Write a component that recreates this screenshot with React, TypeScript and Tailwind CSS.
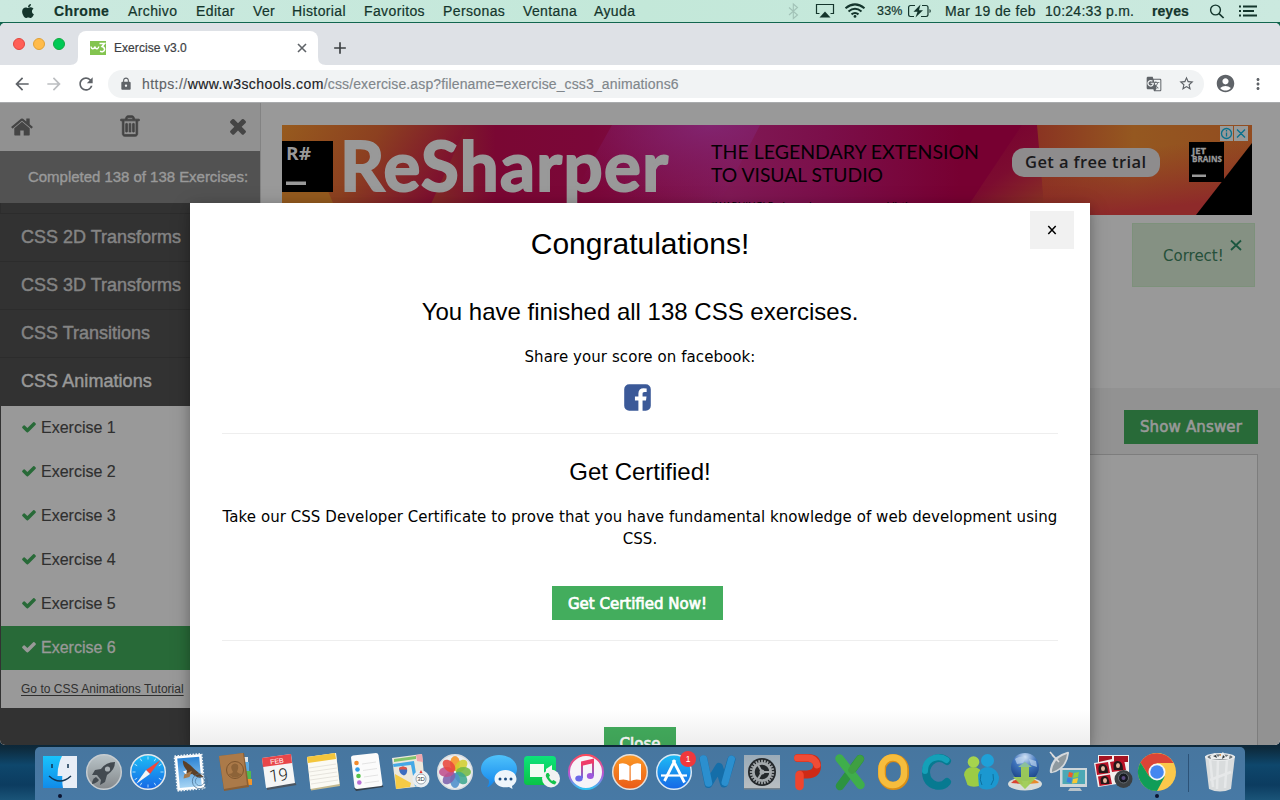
import React from "react";
import { FaApple } from "react-icons/fa";
import {
  MdAccountCircle,
  MdArrowBack,
  MdArrowForward,
  MdClose,
  MdGTranslate,
  MdAdd,
  MdLock,
  MdMoreVert,
  MdRefresh,
  MdStarBorder,
} from "react-icons/md";

const CHECK =
  "M1671 566q0 40-28 68l-724 724-136 136q-28 28-68 28t-68-28l-136-136-362-362q-28-28-28-68t28-68l136-136q28-28 68-28t68 28l294 295 656-657q28-28 68-28t68 28l136 136q28 28 28 68z";
const TIMES =
  "M1490 1322q0 40-28 68l-136 136q-28 28-68 28t-68-28l-294-294-294 294q-28 28-68 28t-68-28l-136-136q-28-28-28-68t28-68l294-294-294-294q-28-28-28-68t28-68l136-136q28-28 68-28t68 28l294 294 294-294q28-28 68-28t68 28l136 136q28 28 28 68t-28 68l-294 294 294 294q28 28 28 68z";
const HOME =
  "M1472 992v480q0 26-19 45t-45 19h-384v-384h-256v384h-384q-26 0-45-19t-19-45v-480q0-1 .5-3t.5-3l575-474 575 474q1 2 1 6zm223-69l-62 74q-8 9-21 11h-3q-13 0-21-7l-692-577-692 577q-12 8-24 7-13-2-21-11l-62-74q-8-10-7-23.5t11-21.5l719-599q32-26 76-26t76 26l244 204v-195q0-14 9-23t23-9h192q14 0 23 9t9 23v408l219 182q10 8 11 21.5t-7 23.5z";
const TRASH =
  "M704 736v576q0 14-9 23t-23 9h-64q-14 0-23-9t-9-23v-576q0-14 9-23t23-9h64q14 0 23 9t9 23zm256 0v576q0 14-9 23t-23 9h-64q-14 0-23-9t-9-23v-576q0-14 9-23t23-9h64q14 0 23 9t9 23zm256 0v576q0 14-9 23t-23 9h-64q-14 0-23-9t-9-23v-576q0-14 9-23t23-9h64q14 0 23 9t9 23zm128 724v-948h-896v948q0 22 7 40.5t14.5 27 10.5 8.5h832q3 0 10.5-8.5t14.5-27 7-40.5zm-672-1076h448l-48-117q-7-9-17-11h-317q-10 2-17 11zm928 32v64q0 14-9 23t-23 9h-96v948q0 83-47 143.5t-113 60.5h-832q-66 0-113-58.5t-47-141.5v-952h-96q-14 0-23-9t-9-23v-64q0-14 9-23t23-9h309l70-167q15-37 54-63t79-26h320q40 0 79 26t54 63l70 167h309q14 0 23 9t9 23z";
const FACEBOOK =
  "M1376 128q119 0 203.5 84.5t84.5 203.5v960q0 119-84.5 203.5t-203.5 84.5h-188v-595h199l30-232h-229v-148q0-56 23.5-84t91.5-28l122-1v-207q-63-9-178-9-136 0-217.5 80t-81.5 226v171h-200v232h200v595h-532q-119 0-203.5-84.5t-84.5-203.5v-960q0-119 84.5-203.5t203.5-84.5h960z";

function Glyph({ d, size, className, weight = 0 }: { d: string; size: number; className?: string; weight?: number }) {
  return (
    <svg viewBox="0 0 1792 1792" width={size} height={size} fill="currentColor" stroke="currentColor" strokeWidth={weight} className={className}>
      <path d={d} />
    </svg>
  );
}

/* ---------- macOS menu bar ---------- */

const menus: [string, string][] = [
  ["Archivo", "w-[68px]"],
  ["Editar", "w-[57px]"],
  ["Ver", "w-[39px]"],
  ["Historial", "w-[72px]"],
  ["Favoritos", "w-[79px]"],
  ["Personas", "w-[80px]"],
  ["Ventana", "w-[71px]"],
  ["Ayuda", "w-[60px]"],
];

function MenuBar() {
  return (
    <header className="flex h-[22px] shrink-0 items-center bg-linear-to-r from-[#cbe9df] via-[#c3e8d9] to-[#cbe9df] text-[14px] tracking-[0.38px] whitespace-nowrap text-[#14352c] [-webkit-text-stroke:0.2px_#14352c]">
      <div className="flex w-[54px] shrink-0 pl-[20px]">
        <FaApple size={16} className="-mt-px" />
      </div>
      <span className="w-[74px] shrink-0 font-bold tracking-[0.4px]">Chrome</span>
      {menus.map(([name, w]) => (
        <span key={name} className={`shrink-0 ${w}`}>
          {name}
        </span>
      ))}
      <div className="flex w-[222px] shrink-0 justify-end">
        <svg width="87" height="22" viewBox="0 0 87 22" fill="none" className="shrink-0 overflow-visible">
          <path d="M0 7.500 8.500 15 4.300 18.500V4L8.500 7.500 0 15" stroke="#a2c2b7" strokeWidth="1.100" />
          <path d="M30.500 13.500H27.500V4.500H44.500V13.500H41.500" stroke="#14352c" strokeWidth="1.200" />
          <path d="M36 11.500 41.500 17.500H30.500Z" fill="#14352c" />
          <g stroke="#14352c" strokeWidth="2">
            <path d="M56.500 8.300Q66 .5 75.500 8.300" />
            <path d="M59.500 11.500Q66 6 72.500 11.500" />
            <path d="M62.500 14.400Q66 11.600 69.500 14.400" />
          </g>
          <circle cx="66" cy="16.400" r="1.400" fill="#14352c" />
        </svg>
      </div>
      <span className="ml-px w-[31px] shrink-0 text-[12.500px] tracking-[0.2px]">33%</span>
      <svg width="24" height="22" viewBox="0 0 24 22" className="shrink-0" fill="none">
        <path d="M7 5.500H2.500Q.6 5.500.6 7.400V14.600Q.6 16.500 2.500 16.500H6M14 5.500H18Q20 5.500 20 7.400V14.600Q20 16.500 18 16.500H13" stroke="#14352c" strokeWidth="1.200" />
        <path d="M21.500 9v4q1.300-.5 1.300-2t-1.300-2ZM12.500 4.500 5.500 11.700H9.500L7.500 17.500 15 10.200H11Z" fill="#14352c" />
      </svg>
      <span className="ml-[13px] w-[100px] shrink-0 tracking-[0.35px]">Mar 19 de feb</span>
      <span className="w-[107px] shrink-0 tracking-[0.28px]">10:24:33 p.m.</span>
      <span className="w-[57px] shrink-0 font-bold tracking-[0.05px]">reyes</span>
      <svg width="60" height="22" viewBox="0 0 60 22" fill="none" stroke="#14352c" className="shrink-0">
        <circle cx="6.500" cy="10" r="4.900" strokeWidth="1.400" />
        <path d="M10 13.700 14.600 18" strokeWidth="1.700" />
        <path d="M34 6.500H48M34 11H45M34 15.500H48" strokeWidth="2" />
        <path d="M30 6.500h2M30 11h2M30 15.500h2" strokeWidth="2" />
      </svg>
    </header>
  );
}

/* ---------- Browser chrome ---------- */

function TabStrip() {
  return (
    <div className="flex h-[42px] shrink-0 items-end bg-[#dee1e6]">
      <div className="flex h-full w-[70px] shrink-0 items-center gap-2 pl-[13px]">
        <span className="size-3 rounded-full border border-[#e2463f] bg-[#ff5f57]" />
        <span className="size-3 rounded-full border border-[#e0a136] bg-[#ffbb4a]" />
        <span className="size-3 rounded-full border border-[#12a940] bg-[#00c955]" />
      </div>
      <svg width="8" height="8" viewBox="0 0 8 8">
        <path d="M8 0V8H0Q8 8 8 0Z" fill="#fff" />
      </svg>
      <div className="flex h-[34px] w-[240px] shrink-0 items-center rounded-t-lg bg-white pl-3">
        <svg width="16" height="14" viewBox="0 0 16 14" fill="none">
          <path d="M0 0H16V14H0Z" fill="#83c44f" />
          <path d="M1 5.500Q1.500 8.300 3.300 7.500 4.700 7.500 4.800 5.500 5.500 8.300 7.500 7.500 8.600 7 8.800 5.500" stroke="#fff" strokeWidth="1.400" />
          <path d="M9.500 2.500H14.500L12 5.500Q14.800 6.200 14.500 8.700 13.500 11.600 10 10.300" stroke="#fff" strokeWidth="1.600" />
        </svg>
        <span className="ml-2 w-[182px] text-[12px] tracking-[0.06px] text-[#3c4043] [-webkit-text-stroke:0.2px_#3c4043]">Exercise v3.0</span>
        <svg width="12" height="12" viewBox="0 0 12 12" stroke="#5f6368" strokeWidth="1.600" className="shrink-0">
          <path d="M2 2 10 10M10 2 2 10" />
        </svg>
      </div>
      <svg width="8" height="8" viewBox="0 0 8 8">
        <path d="M0 0V8H8Q0 8 0 0Z" fill="#fff" />
      </svg>
      <div className="flex h-[34px] items-center pl-[4px]">
        <MdAdd size={20} className="text-[#3c4043]" />
      </div>
    </div>
  );
}

function Toolbar() {
  return (
    <div className="flex h-[38px] shrink-0 items-center border-b border-[#a9abad] bg-white text-[#5f6368]">
      <div className="flex w-[108px] shrink-0 items-center gap-3 pl-3">
        <MdArrowBack size={20} />
        <MdArrowForward size={20} className="text-[#bcbec1]" />
        <MdRefresh size={20} />
      </div>
      <div className="flex h-7 w-[1096px] shrink-0 items-center rounded-full bg-[#f1f3f4] pl-[11px]">
        <MdLock size={14} />
        <span className="ml-[9px] grow pt-px text-[14px] tracking-[0.13px] text-[#80868b] [-webkit-text-stroke:0.15px]">
          <span className="tracking-[0.45px] text-[#5f6368]">https://</span>
          <span className="tracking-[0.41px] text-[#202124]">www.w3schools.com</span>
          /css/exercise.asp?filename=exercise_css3_animations6
        </span>
        <MdGTranslate size={16} className="mr-4" />
        <MdStarBorder size={17} className="mr-[9px]" />
      </div>
      <MdAccountCircle size={21} className="ml-[11px] shrink-0" />
      <MdMoreVert size={18} className="ml-[13px] shrink-0" />
    </div>
  );
}

/* ---------- Exercise page ---------- */

const chapters = ["CSS 2D Transforms", "CSS 3D Transforms", "CSS Transitions"];
const exercises = [1, 2, 3, 4, 5, 6];

function Sidebar() {
  return (
    <aside className="flex w-[260px] shrink-0 flex-col bg-[#323232]">
      <div className="flex h-12 shrink-0 items-center justify-between bg-[#919191] pr-[10px] pl-[10px] text-[#454545]">
        <Glyph d={HOME} size={24} />
        <Glyph d={TRASH} size={24} weight={60} className="-mt-0.5" />
        <Glyph d={TIMES} size={24} className="-mt-0.5" />
      </div>
      <div className="flex h-[52px] shrink-0 items-center bg-[#525252] pl-7 text-[15px] tracking-[-0.03px] whitespace-nowrap text-[#999] [-webkit-text-stroke:0.4px_#999]">
        Completed 138 of 138 Exercises:
      </div>
      <div className="h-[10px] shrink-0 border-l border-[#2d2d2d]" />
      {chapters.map((c) => (
        <div key={c} className="flex h-12 shrink-0 items-center border-t border-[#2c2c2c] pl-[21px] text-[18px] text-[#848484] [-webkit-text-stroke:0.45px_#848484]">
          {c}
        </div>
      ))}
      <div className="flex h-[49px] shrink-0 items-center border-t border-[#2c2c2c] pb-0.5 pl-[21px] text-[18px] tracking-[0.05px] text-[#999] [-webkit-text-stroke:0.45px_#999]">
        CSS Animations
      </div>
      <div className="ml-px shrink-0 bg-[#999] text-[#2f2f2f]">
        {exercises.map((n) => (
          <div
            key={n}
            className={
              n === 6
                ? "flex h-11 items-center bg-[#286a38] pl-5 text-[#999] [-webkit-text-stroke:0.3px_#999]"
                : "flex h-11 items-center pl-5 [-webkit-text-stroke:0.15px_#2f2f2f]"
            }
          >
            <Glyph d={CHECK} size={16} className={n === 6 ? "-mt-0.5 text-[#999]" : "-mt-0.5 text-[#286a38]"} />
            <span className="ml-1 text-[16px]">Exercise {n}</span>
          </div>
        ))}
        <div className="flex h-[38px] items-center pl-5 text-[12px] tracking-[0.02px] underline underline-offset-2">Go to CSS Animations Tutorial</div>
      </div>
    </aside>
  );
}

function Banner() {
  return (
    <svg width="970" height="90" viewBox="0 0 970 90" className="block">
      <defs>
        <linearGradient id="bg" x1="0" x2="1">
          <stop offset="0" stopColor="#91521f" />
          <stop offset=".13" stopColor="#84371f" />
          <stop offset=".22" stopColor="#7a0733" />
          <stop offset=".32" stopColor="#7b0739" />
          <stop offset=".46" stopColor="#801955" />
          <stop offset=".56" stopColor="#7b0f4a" />
          <stop offset=".7" stopColor="#770031" />
        </linearGradient>
        <radialGradient id="glow" cx=".75" cy="0" r=".9">
          <stop offset="0" stopColor="#82246f" />
          <stop offset="1" stopColor="#801860" stopOpacity="0" />
        </radialGradient>
        <linearGradient id="or" x1="0" x2="1">
          <stop offset="0" stopColor="#8a3422" />
          <stop offset=".45" stopColor="#955820" />
          <stop offset="1" stopColor="#924c20" />
        </linearGradient>
        <linearGradient id="fade" x1=".3" y1="0" x2="1" y2=".9">
          <stop offset="0" stopColor="#770031" />
          <stop offset=".45" stopColor="#7c0c30" />
          <stop offset="1" stopColor="#8c3a22" />
        </linearGradient>
        <linearGradient id="red" x1="0" y1="0" x2=".25" y2="1">
          <stop offset=".35" stopColor="#8f3023" stopOpacity="0" />
          <stop offset="1" stopColor="#8e2a2a" />
        </linearGradient>
        <linearGradient id="left" x1="0" y1="0" x2="1" y2=".3">
          <stop offset="0" stopColor="#975b1e" />
          <stop offset=".5" stopColor="#8c4020" />
          <stop offset="1" stopColor="#7c0c30" />
        </linearGradient>
      </defs>
      <path d="M0 0H970V90H0Z" fill="url(#bg)" />
      <path d="M0 0H185L144 90H0Z" fill="url(#left)" />
      <path d="M0 66H46L56 90H0Z" fill="#945a1e" />
      <path d="M330 0H478L432 90H280Z" fill="url(#glow)" />
      <path d="M740 0H760L775 90H680Z" fill="url(#fade)" />
      <path d="M755 0H970V90H763Z" fill="url(#or)" />
      <path d="M755 0H970V90H763Z" fill="url(#red)" />
      <path d="M970 18V90H914Z" fill="#000" />
      <path d="M0 16H51V67H0Z" fill="#000" />
      <text x="4" y="34.500" fontSize="17" fontWeight="700" fontFamily="Open Sans, sans-serif" fill="#999" textLength="25" lengthAdjust="spacingAndGlyphs">R#</text>
      <path d="M4 56.500H24V60H4Z" fill="#999" />
      <text x="58" y="66" fontSize="69" fontWeight="700" fontFamily="Lato, sans-serif" fill="#999" stroke="#999" strokeWidth="2" textLength="328" lengthAdjust="spacing">ReSharper</text>
      <g fill="#050004" fontFamily="Lato, sans-serif" fontSize="20">
        <text x="429" y="34" textLength="268" lengthAdjust="spacingAndGlyphs">THE LEGENDARY EXTENSION</text>
        <text x="429" y="57" textLength="172" lengthAdjust="spacingAndGlyphs">TO VISUAL STUDIO</text>
        <text x="429" y="84" fontSize="10" textLength="210" lengthAdjust="spacingAndGlyphs">*WARNING! Prolonged use may cause addiction.</text>
      </g>
      <rect x="730" y="23" width="148" height="29" rx="12" fill="#8e8c8d" />
      <text x="743" y="43" fontSize="16.500" fontWeight="600" fontFamily="Open Sans, sans-serif" fill="#1a1a1c" textLength="121" lengthAdjust="spacing">Get a free trial</text>
      <path d="M907 17H942V57H907Z" fill="#000" />
      <g fill="#999" stroke="#999" strokeWidth=".3" fontFamily="Open Sans, sans-serif" fontWeight="700" fontSize="8.500">
        <text x="910" y="28.500" textLength="14" lengthAdjust="spacingAndGlyphs">JET</text>
        <text x="910" y="36.800" textLength="30" lengthAdjust="spacingAndGlyphs">BRAINS</text>
      </g>
      <path d="M910 49.500H924V52H910Z" fill="#999" />
      <path d="M938 1H951V16H938ZM952 1H966V16H952Z" fill="#979999" />
      <g fill="none" stroke="#08708c" strokeWidth="1.300">
        <circle cx="944.500" cy="8.500" r="5" />
        <path d="M944.500 7.500V11.500M944.500 5V6.400M955 4.500 963 12.500M963 4.500 955 12.500" />
      </g>
    </svg>
  );
}

function ExercisePane() {
  return (
    <main className="flex grow flex-col border-l border-[#838383] bg-[#929292]">
      <div className="h-[285px] shrink-0 bg-[#999] pt-[22px] pl-[21px]">
        <Banner />
        <div className="mt-2 ml-[850px] flex h-16 w-[123px] border border-[#7d917b] bg-[#859183] pl-[30px] text-[#25503a]">
          <span className="mt-[22px] font-['DejaVu_Sans',sans-serif] text-[15px] leading-5">Correct!</span>
          <svg width="14" height="14" viewBox="0 0 14 14" stroke="#1c5740" strokeWidth="1.800" className="mt-[14px] ml-[5px] shrink-0">
            <path d="M2 2.500 12 12M12 2.500 2 12" />
          </svg>
        </div>
      </div>
      <div className="flex shrink-0 justify-end pt-[22px] pr-[22px]">
        <button className="flex h-[34px] w-[134px] items-center justify-center bg-[#286a38] pt-px font-['DejaVu_Sans',sans-serif] text-[15px] tracking-[0.15px] text-[#999] [-webkit-text-stroke:0.6px_#999]">
          Show Answer
        </button>
      </div>
      <div className="mt-[10px] mr-[22px] ml-5 grow border border-b-0 border-[#7d7d7d] bg-[#999]" />
    </main>
  );
}

function CongratsModal() {
  return (
    <section
      role="dialog"
      className="absolute top-[100px] right-[190px] left-[190px] flex h-[542px] flex-col items-center overflow-hidden bg-white px-8 pt-[18px] text-center text-black shadow-[0_4px_10px_rgba(0,0,0,0.2),0_4px_20px_rgba(0,0,0,0.19)]"
    >
      <button className="absolute top-2 right-4 flex h-[38px] w-11 items-center justify-center bg-[#f1f1f1]">
        <svg width="10" height="10" viewBox="0 0 10 10" stroke="#000" strokeWidth="1.500">
          <path d="M1.300 1 8.700 9M8.700 1 1.300 9" />
        </svg>
      </button>
      <h1 className="text-[30px] leading-[45px]">Congratulations!</h1>
      <h2 className="mt-7 text-2xl leading-9">You have finished all 138 CSS exercises.</h2>
      <p className="mt-4 font-['DejaVu_Sans',sans-serif] text-[15px] leading-[22px] tracking-[0.08px]">Share your score on facebook:</p>
      <Glyph d={FACEBOOK} size={31} className="mt-[14px] mr-[5px] shrink-0 text-[#3b5998]" />
      <hr className="mt-5 w-full border-[#eee]" />
      <h2 className="mt-[20px] text-2xl leading-9">Get Certified!</h2>
      <p className="mt-4 w-[840px] shrink-0 font-['DejaVu_Sans',sans-serif] text-[15px] leading-[22px] tracking-[0.06px]">
        Take our CSS Developer Certificate to prove that you have fundamental knowledge of web development using CSS.
      </p>
      <button className="mt-[36px] mr-[5px] h-[34px] w-[171px] shrink-0 bg-[#43ad5d] pt-0.5 font-['DejaVu_Sans',sans-serif] text-[15px] text-white [-webkit-text-stroke:0.7px_#fff]">
        Get Certified Now!
      </button>
      <hr className="mt-5 w-full border-[#eee]" />
      <button className="mt-[86px] h-[34px] w-[72px] shrink-0 bg-[#43ad5d] font-['DejaVu_Sans',sans-serif] text-[15px] text-white [-webkit-text-stroke:0.7px_#fff]">
        Close
      </button>
      <div className="absolute inset-x-0 bottom-0 h-9 bg-linear-to-b from-black/0 to-black/7" />
    </section>
  );
}

/* ---------- Dock ---------- */

function Disc({ fill, cx = 22, ring = "#d9dee3" }: { fill: string; cx?: number; ring?: string }) {
  return <circle cx={cx} cy="22" r="17.300" fill={fill} stroke={ring} strokeWidth="1.500" />;
}

const petals = ["#f79422", "#d3cf2f", "#74b944", "#3fa78f", "#4f8fcb", "#7c62ac", "#c0508c", "#e9483c"];
const ticks = [0, 30, 60, 90, 120, 150, 180, 210, 240, 270, 300, 330];
const teeth = [0, 15, 30, 45, 60, 75, 90, 105, 120, 135, 150, 165, 180, 195, 210, 225, 240, 255, 270, 285, 300, 315, 330, 345];

const dockIcons: React.ReactNode[] = [
  <g key="finder">
    <path d="M5 6H39V38H5Z" fill="url(#finderBlue)" />
    <path d="M24 6H39V38H25Q24 33 24.300 26H19.500Q19.500 15 24 6Z" fill="#e8eef7" />
    <path d="M11 26Q22 36 33 26" fill="none" stroke="#123452" strokeWidth="1.400" />
    <path d="M14 14V18M30 14V18" stroke="#123452" strokeWidth="1.500" />
  </g>,
  <g key="launchpad">
    <Disc fill="url(#silver)" ring="#c6ccd0" />
    <path d="M33 12Q24 12 19 19L13 20 10 25 15 25 19 30 18 35 23 32 25 25Q33 20 33 12Z" fill="#434a50" />
    <circle cx="25.500" cy="19" r="2.600" fill="#a9b0b4" />
    <path d="M14 27Q10 29 10 34 15 33 17 30Z" fill="#434a50" />
  </g>,
  <g key="safari">
    <Disc fill="url(#skyBlue)" ring="#e6eaee" />
    <g stroke="#c9ecff" strokeWidth=".8">
      {ticks.map((a) => (
        <path key={a} d="M22 6.500V9.500" transform={`rotate(${a} 22 22)`} />
      ))}
    </g>
    <path d="M34.500 10 24 24 20 20Z" fill="#f2463a" />
    <path d="M10 34 24 24 20 20Z" fill="#f4f4f4" />
  </g>,
  <g key="mail" transform="rotate(-5 20 22)">
    <path d="M6 5H33V39.500H6Z" fill="#fff" stroke="#eef2f5" strokeDasharray="1.500 1.500" strokeWidth="2" />
    <path d="M8.500 7.500H30.500V37H8.500Z" fill="url(#mailSky)" />
    <path d="M14 10Q13 15 17 20L16 23Q19 25 22 24 27 30 33 28 29 24 25 20 21 14 14 10Z" fill="#5b4028" />
    <path d="M14 24 22 21 19 27 13 28Z" fill="#a5794b" />
    <path d="M13 21 17 20 16 24Z" fill="#fff" />
    <circle cx="29" cy="32" r="7.500" fill="none" stroke="#466b8c" strokeWidth=".7" />
    <circle cx="29" cy="32" r="4.500" fill="none" stroke="#466b8c" strokeWidth=".6" />
  </g>,
  <g key="contacts">
    <path d="M30 7H34V16H30Z" fill="#dfe6ea" />
    <path d="M31 12H35V21H31Z" fill="#5aa9e0" />
    <path d="M32 21H37V29H32Z" fill="#52b94f" />
    <path d="M32 29H38V35H32Z" fill="#f0952c" />
    <path d="M5 6 30 3 35 37 10 41Z" fill="#8a5f35" />
    <path d="M5 6 29 3 33 35 10 39Z" fill="#ab7a49" />
    <circle cx="21" cy="20" r="8.500" fill="none" stroke="#7d552e" />
    <path d="M14.500 24Q18 24 19 22 16 17 18 15 21 12 24 15 25 18 23 22 25 24 28 24 21 31 14.500 24Z" fill="#8d6338" />
  </g>,
  <g key="calendar">
    <path d="M9 36 37 32 38.500 35 9 40Z" fill="#4b5560" />
    <path d="M4 8 33 4 37 33 8 38Z" fill="#f5f5f5" />
    <path d="M4 8 33 4 34 13 5 17Z" fill="#e8464a" />
    <text x="19" y="13.500" textAnchor="middle" fontSize="7" fill="#fff" fontFamily="Liberation Sans, sans-serif" transform="rotate(-7 19 12)">FEB</text>
    <text x="21" y="31" textAnchor="middle" fontSize="17" fill="#222" fontFamily="Roboto, sans-serif" fontWeight="300" transform="rotate(-7 21 28)">19</text>
  </g>,
  <g key="notes">
    <path d="M5 7 34 3 38 36 9 40.500Z" fill="#c4b98f" />
    <path d="M5 7 34 3 37.500 34 8.500 39Z" fill="#fbfaf4" />
    <path d="M5 7 33 3 34 9 6 13Z" fill="#f4c63c" />
    <path d="M7 18 34 14M7 22 35 18M8 26 35 22M8 30 36 26M9 34 36 30" stroke="#dcdad2" strokeWidth=".7" />
  </g>,
  <g key="reminders">
    <path d="M8 38 36 34.500 37.500 37 10 41Z" fill="#34414d" />
    <path d="M5 7.500Q5 6 7 5.500L30 3Q32 3 32.500 5L36.500 34Q36.500 36 35 36L11 39Q9 39 8.500 37Z" fill="#fbfbfb" />
    <circle cx="10.500" cy="13" r="2.300" fill="#f28b2d" />
    <circle cx="11.500" cy="19.500" r="2.300" fill="#2f9be8" />
    <circle cx="12.500" cy="26" r="2.300" fill="#55c24a" />
    <circle cx="13.300" cy="32.500" r="2.300" fill="#b96fd6" />
    <path d="M16 14 30 12M17 20.500 31 18.500M18 27 32 25M18.500 33 33 31" stroke="#ddd" strokeWidth=".8" />
  </g>,
  <g key="maps">
    <path d="M2 8 32 4 35 36 6 39Z" fill="#ede8dc" />
    <path d="M4 9 26 6V9L4 12Z" fill="#82c46a" />
    <path d="M26 5 32 4 33 12 27 11Z" fill="#f0a6ad" />
    <path d="M3 14 24 11 28 36 25 36.500 21 15 3.500 17Z" fill="#45a8e6" />
    <path d="M5 24 21 33 20 37 6 39Z" fill="#f6cb45" />
    <path d="M9 18Q13 15 17 18 18 24 14 25.500 9 24 9 18Z" fill="#3d6cc0" />
    <path d="M9 18Q13 15 17 18V19.500H9Z" fill="#e25244" />
    <circle cx="31" cy="29" r="8.500" fill="#e9eef2" />
    <circle cx="31" cy="29" r="5" fill="#fff" stroke="#81909c" strokeWidth=".8" />
    <text x="31" y="31.200" fontSize="6" textAnchor="middle" fill="#333" fontFamily="Liberation Sans, sans-serif">3D</text>
    <path d="M31 20 32.500 23H29.500Z" fill="#e3342c" />
  </g>,
  <g key="photos">
    <Disc fill="#eceff0" cx={21} ring="#dadddf" />
    {petals.map((c, i) => (
      <ellipse key={c} cx="21" cy="13.500" rx="4.900" ry="7.500" fill={c} opacity=".88" transform={`rotate(${i * 45} 21 22)`} />
    ))}
  </g>,
  <g key="messages">
    <path d="M21 5C31 5 39 11 39 19 39 27 31 32 22 32 19 32 17 31.500 16 31.500 14 35 11 37 9 37 11 35 11.500 32 10.500 29.500 6 27 3 23 3 19 3 11 11 5 21 5Z" fill="url(#bubble)" />
    <path d="M27.500 20C34 20 38.500 24 38.500 29 38.500 32 36.500 34.500 34 36L34.500 39 31 37C23 38.500 16.500 35 16.500 29 16.500 24 21 20 27.500 20Z" fill="#eef5fb" />
    <g fill="#1c4d82">
      <circle cx="22" cy="29" r="1.500" />
      <circle cx="27.500" cy="29" r="1.500" />
      <circle cx="33" cy="29" r="1.500" />
    </g>
  </g>,
  <g key="facetime">
    <rect x="2" y="6" width="32" height="29" rx="3.500" fill="url(#ftGreen)" />
    <path d="M8 14H22V27H8ZM24 19 30 15V26L24 22Z" fill="#f2fbf3" />
    <circle cx="29" cy="28.500" r="9" fill="#f1f2f2" />
    <path d="M25 23Q22.500 25 25 28.500 28.500 34 33 34.500L34.500 32 31.500 30 30 31Q27.500 29 27 27L28 25.500 26.500 23Z" fill="#13c44c" />
  </g>,
  <g key="itunes">
    <circle cx="20" cy="22" r="17" fill="#f6f4f8" stroke="url(#rainbow)" strokeWidth="2" />
    <path d="M15 12H17V28H15ZM26 10H28V26H26Z" fill="url(#rainbow2)" />
    <path d="M15 11.500 28 8.500V13L15 16Z" fill="#ef3b68" />
    <ellipse cx="13" cy="28.500" rx="3.700" ry="3" fill="#6a68e8" />
    <ellipse cx="24.300" cy="26" rx="3.500" ry="3" fill="#9d58dd" />
  </g>,
  <g key="ibooks">
    <Disc fill="url(#orange)" cx={20} ring="#e3e0dc" />
    <path d="M19.500 16Q15 12 9 14V30Q15 28.500 19.500 31ZM20.700 16Q25 12 31 14V30Q25 28.500 20.700 31Z" fill="#fff" />
  </g>,
  <g key="appstore">
    <Disc fill="url(#skyBlue)" cx={20} ring="#dbe8f4" />
    <g stroke="#fff" fill="none">
      <path d="M7 25.500H33" strokeWidth="2.200" />
      <path d="M21 10 10.500 31M19 10 30.500 32.500" strokeWidth="2.800" />
    </g>
    <circle cx="34" cy="9" r="8" fill="#f0383c" />
    <text x="34" y="12" fontSize="8.500" textAnchor="middle" fill="#fff" fontFamily="Liberation Sans, sans-serif">1</text>
  </g>,
  <g key="word" fill="none" strokeLinecap="round" strokeLinejoin="round">
    <path d="M5.500 9.500 10.500 34 21 17 26 33.500 33.500 9.500" stroke="#156ea9" strokeWidth="8" />
    <path d="M5.500 9 10.500 33" stroke="#2b8fcf" strokeWidth="7.500" />
    <path d="M27 32.500 33.500 9" stroke="#2b8fcf" strokeWidth="7" />
  </g>,
  <g key="settings">
    <path d="M2 5H38V38H2Z" fill="url(#silver2)" />
    <path d="M2 38H38V39.500H2Z" fill="#75828c" />
    <circle cx="20" cy="22" r="14" fill="#24282b" />
    <g stroke="#a3a8ab" strokeWidth="1.700">
      {teeth.map((a) => (
        <path key={a} d="M20 9.800V12.500" transform={`rotate(${a} 20 22)`} />
      ))}
    </g>
    <circle cx="20" cy="22" r="8.700" fill="none" stroke="#a3a8ab" strokeWidth="2.800" />
    <path d="M20 22H29M20 22 15.500 14M20 22 15.500 30" stroke="#a3a8ab" strokeWidth="2" />
    <circle cx="20" cy="22" r="2.500" fill="#a3a8ab" />
  </g>,
  <g key="powerpoint" fill="none" strokeLinecap="round">
    <path d="M12 8H22Q31 8 31 16 31 24 21 24.500L14 24.500" stroke="#cf2a16" strokeWidth="8" />
    <path d="M11.500 8H22Q29 8 31 15" stroke="#f04c36" strokeWidth="7" />
    <path d="M13.500 25V36" stroke="#ef452e" strokeWidth="8.500" />
  </g>,
  <g key="excel" fill="none" strokeLinecap="round">
    <path d="M30 9 10 36" stroke="#2d9340" strokeWidth="8.500" />
    <path d="M9.500 8.500 30.500 35" stroke="#3fae4b" strokeWidth="8.500" />
    <path d="M22 20 30 9" stroke="#3f9f42" strokeWidth="7.500" />
  </g>,
  <g key="outlook" fill="none">
    <rect x="8" y="8" width="23" height="28" rx="11.500" stroke="#d98e17" strokeWidth="8" />
    <rect x="7.500" y="7.500" width="22.500" height="27.500" rx="11" stroke="#f6bd3d" strokeWidth="6.500" />
  </g>,
  <g key="communicator" fill="none" strokeLinecap="round">
    <path d="M29 11Q23 6 15.500 9.500 8 14 8 22.500 8.500 33 18 35.500 25 37 29 32" stroke="#077a91" strokeWidth="8" />
    <path d="M7 21Q7 11 16 8 23 6 28.500 10" stroke="#14a0b8" strokeWidth="6" />
  </g>,
  <g key="messenger">
    <circle cx="11.500" cy="12" r="5.800" fill="#a5d44e" />
    <path d="M2 25Q3 17 11 17 19 17 20 26L17 36Q10 38 5.500 35Z" fill="#9ccc45" />
    <circle cx="25.500" cy="10.500" r="6.500" fill="#1fa0d8" />
    <path d="M16 25Q18 17 26 17 35 18 37 27 37 33 33 37 24 42 17 37Z" fill="#1b98d0" />
    <path d="M31 24Q33 30 29 35M19 24Q17 30 20 35" stroke="#0d719f" fill="none" />
  </g>,
  <g key="downloader">
    <ellipse cx="19" cy="34" rx="17" ry="6.500" fill="#d8dcda" />
    <path d="M5 33Q8 29 15 29L17 34Z" fill="#d9432f" />
    <path d="M33 33Q30 29 23 29L22 34Z" fill="#e98a2b" />
    <circle cx="19" cy="17" r="14" fill="url(#globe)" />
    <path d="M9 9Q14 5 20 8L17 13 11 14ZM23 9 30 11 31 17 25 15Z" fill="#bcd3ec" opacity=".7" />
    <path d="M15 15H23V27H31L19 39 7 27H15Z" fill="#9fcc55" opacity=".95" />
    <path d="M12 17 19 12 26 17Z" fill="#8bc09b" />
  </g>,
  <g key="remote">
    <path d="M10 18H37V37H10Z" fill="#cdd6da" />
    <path d="M12.500 20H35V34H12.500Z" fill="#4ca8b5" />
    <path d="M20 38H30L32 41H18Z" fill="#b9c3c9" />
    <path d="M19 22 23 23 22 27.500 18 26.500Z" fill="#ee5a2d" />
    <path d="M24 23 29 22 28 27 23 28Z" fill="#8fce3c" />
    <path d="M17.500 27.500 22 28.500 21 33 16.500 32Z" fill="#3b7fdd" />
    <path d="M23 29 28 28 27 33 22 33.500Z" fill="#f7c934" />
    <path d="M0 19Q-1 24 2 23 17 20 19 3 19 1 17 2 2 6 0 19Z" fill="#d3d8dc" />
    <path d="M2 20Q4 8 17 4 16 17 2 22Z" fill="#8e999f" />
    <path d="M9 12 0 2M9 12 2 5" stroke="#ddd" strokeWidth="1.500" />
  </g>,
  <g key="photobooth">
    <path d="M4 5H35V24H4Z" fill="#f5f1f0" />
    <path d="M0 13 32 8 35 32 4 37Z" fill="#f3efee" />
    <path d="M5 6H18V9L5 12ZM20 6H34V12H20Z" fill="#a51422" />
    <path d="M1.500 14 14 12 16 23 3 25ZM16 12 30 9.500 32 20 18 22ZM4 26.500 16 24.500 18 34 5.500 36Z" fill="#bb1428" />
    <g fill="#241819">
      <path d="M5 23Q3 14 8.500 14 14 14 14 23ZM20 20Q18 11 23.500 11 29 11 29 20ZM7 34Q5 26 11 26 15 26 15.500 34Z" />
    </g>
    <g fill="#e9b9a0">
      <ellipse cx="9" cy="18.500" rx="2" ry="2.500" />
      <ellipse cx="24" cy="15.500" rx="2" ry="2.500" />
      <ellipse cx="11" cy="30.500" rx="2" ry="2.500" />
    </g>
    <circle cx="29.500" cy="29" r="9" fill="#3c4043" />
    <circle cx="29.500" cy="28" r="5" fill="#171a20" stroke="#666c72" />
    <circle cx="29.500" cy="28" r="2" fill="#5b4a82" />
  </g>,
  <g key="chrome">
    <circle cx="19" cy="22" r="19" fill="#fbc84b" />
    <path d="M19 13H35.500A19 19 0 0 0 2.500 12.500L11.200 26.500Z" fill="#db4437" />
    <path d="M2.500 12.500A19 19 0 0 0 19 41L26.800 26.500 11.200 26.500Z" fill="#109d58" />
    <circle cx="19" cy="22" r="8.500" fill="#f4f6f7" />
    <circle cx="19" cy="22" r="6.800" fill="#4587f0" />
  </g>,
];

function Dock() {
  return (
    <footer className="mt-px flex h-[54px] shrink-0 justify-center">
      <div className="flex h-full w-[1210px] items-start rounded-t-[5px] bg-linear-to-b from-[#47769f] to-[#4779a5] pt-[3px] pl-[3px]">
        <svg width="0" height="0" className="size-0">
          <defs>
            <linearGradient id="finderBlue" x1="0" y1="0" x2="0" y2="1"><stop stopColor="#19c3fb" /><stop offset="1" stopColor="#118be9" /></linearGradient>
            <linearGradient id="silver" x1="0" y1="0" x2="0" y2="1"><stop stopColor="#b9c4c8" /><stop offset="1" stopColor="#84888b" /></linearGradient>
            <linearGradient id="silver2" x1="0" y1="0" x2="0" y2="1"><stop stopColor="#9aabb8" /><stop offset="1" stopColor="#b9bec1" /></linearGradient>
            <linearGradient id="skyBlue" x1="0" y1="0" x2="0" y2="1"><stop stopColor="#1dbdf5" /><stop offset="1" stopColor="#1667e6" /></linearGradient>
            <linearGradient id="mailSky" x1="0" y1="0" x2="0" y2="1"><stop stopColor="#2b83d4" /><stop offset="1" stopColor="#a6d4f4" /></linearGradient>
            <linearGradient id="bubble" x1="0" y1="0" x2="0" y2="1"><stop stopColor="#4fc2fa" /><stop offset="1" stopColor="#1286ee" /></linearGradient>
            <linearGradient id="ftGreen" x1="0" y1="0" x2="0" y2="1"><stop stopColor="#0de37b" /><stop offset="1" stopColor="#0bc346" /></linearGradient>
            <linearGradient id="orange" x1="0" y1="0" x2="0" y2="1"><stop stopColor="#fb9a26" /><stop offset="1" stopColor="#ea5a17" /></linearGradient>
            <linearGradient id="rainbow" x1="0" y1="0" x2="0" y2="1"><stop stopColor="#fb4a5c" /><stop offset=".6" stopColor="#b559dc" /><stop offset="1" stopColor="#2fc6f3" /></linearGradient>
            <linearGradient id="rainbow2" gradientUnits="userSpaceOnUse" x1="0" y1="9" x2="0" y2="30"><stop stopColor="#f23a62" /><stop offset="1" stopColor="#6b6bea" /></linearGradient>
            <radialGradient id="globe" cx=".5" cy=".15" r=".9"><stop stopColor="#d3e4f6" /><stop offset=".45" stopColor="#3e73bb" /><stop offset="1" stopColor="#163c7d" /></radialGradient>
          </defs>
        </svg>
        {dockIcons.map((icon, i) => (
          <div key={i} className="flex w-11 shrink-0 flex-col items-center">
            <svg width="44" height="44" viewBox="0 0 44 44" className="block shrink-0 overflow-visible">
              {icon}
            </svg>
            {i === 0 && <span className="size-1 rounded-full bg-[#0b1430]" />}
            {i === 25 && <span className="mr-[6px] size-1 rounded-full bg-[#0b1430]" />}
          </div>
        ))}
        <div className="mt-1 ml-[6px] h-[38px] w-px shrink-0 bg-[#2c5277]" />
        <svg width="44" height="44" viewBox="0 0 44 44" className="ml-[9px] shrink-0">
          <path d="M7 6H37L33 39Q22 44 11 39Z" fill="#d9dcdd" />
          <path d="M12 9 15 37M20 10 19 39M29 9 27 38M12 30 33 22" stroke="#e6e8e9" strokeWidth="2.500" />
          <ellipse cx="22" cy="7" rx="15" ry="4" fill="#e9ebec" />
          <ellipse cx="22" cy="7" rx="12.500" ry="2.800" fill="#70787d" />
          <path d="M12 6 17 3 20 7 25 2 28 7 32 4 31 9H13Z" fill="#eceeee" />
          <path d="M15 6 18 5 19 8ZM25 5 27 7 24 9Z" fill="#30383c" />
          <path d="M21 5 23 4 23 6Z" fill="#db8b35" />
        </svg>
      </div>
    </footer>
  );
}

export default function App() {
  return (
    <div className="flex h-[800px] w-[1280px] flex-col overflow-hidden bg-[linear-gradient(180deg,#12664f_0,#12664f_30px,#0b2233_740px,#0d2a3c_748px,#0e476c_765px,#0c3c60_785px,#1a5478_800px)] font-['Liberation_Sans',Arial,sans-serif]">
      <MenuBar />
      <div className="mt-px flex h-[722px] shrink-0 flex-col overflow-hidden rounded-[5px] bg-white">
        <TabStrip />
        <Toolbar />
        <div className="relative flex grow overflow-hidden">
          <Sidebar />
          <ExercisePane />
          <CongratsModal />
        </div>
      </div>
      <div className="h-px shrink-0" />
      <Dock />
    </div>
  );
}
